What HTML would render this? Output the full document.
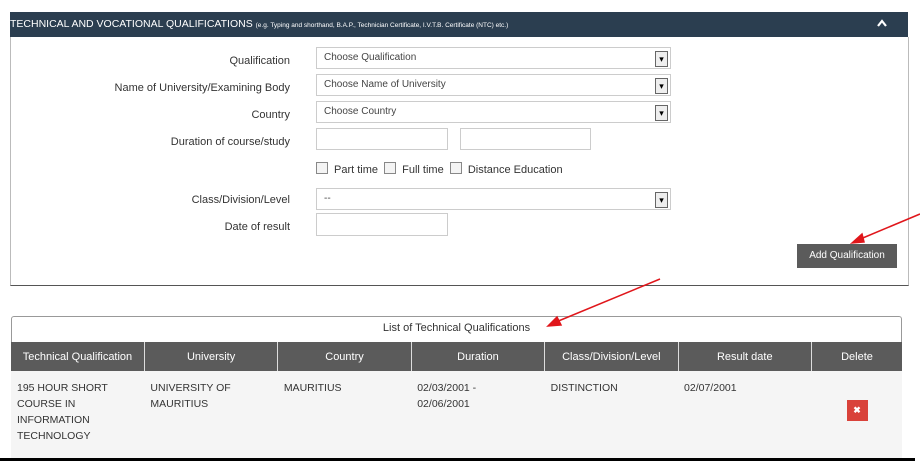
<!DOCTYPE html><html><head><style>
body{margin:0;width:920px;height:475px;background:#fff;font-family:"Liberation Sans",sans-serif;position:relative;overflow:hidden;font-size:11px;color:#333}
.a{position:absolute}
.hd{left:10px;top:12px;width:898px;height:25px;background:#2b3e50;color:#fff}
.lbl{position:absolute;right:630px;text-align:right;font-size:11px;color:#333;white-space:nowrap}
.sel{position:absolute;left:316px;width:355px;height:22px;border:1px solid #ccc;background:#fff;font-size:10px;color:#444;line-height:20px;padding-left:7px;box-sizing:border-box}
.sel:after{content:"▾";position:absolute;right:2px;top:3px;width:11px;height:14px;border:1px solid #666;background:#eee;font-size:9px;line-height:14px;text-align:center;color:#000}
.inp{position:absolute;height:22px;border:1px solid #ccc;background:#fff;box-sizing:border-box}
.cb{display:inline-block;width:10px;height:10px;border:1px solid #888;vertical-align:-1px;margin-right:6px;background:#f4f4f4}
table{border-collapse:collapse;position:absolute;left:11px;top:342px;width:891px;table-layout:fixed}
th{background:#5b5b5b;color:#fff;font-weight:normal;height:29px;font-size:11px;border-right:1px solid #ddd;padding:0}
td{background:#f5f5f5;vertical-align:top;padding:9px 20px 9px 6px;height:71px;font-size:10.5px;line-height:16px;color:#333}
</style></head><body>
<div class="a hd"><span class="a" style="left:0;top:6px;font-size:10.5px;white-space:nowrap">TECHNICAL AND VOCATIONAL QUALIFICATIONS <span style="font-size:6.5px">(e.g. Typing and shorthand, B.A.P., Technician Certificate, I.V.T.B. Certificate (NTC) etc.)</span></span>
<svg class="a" style="left:867px;top:7px" width="10" height="8"><path d="M1 7 L5 2 L9 7" stroke="#fff" stroke-width="2.2" fill="none"/></svg></div>
<div class="a" style="left:10px;top:37px;width:899px;height:249px;border:1px solid #bbb;border-top:none;border-bottom:1px solid #555;box-sizing:border-box"></div>
<div class="lbl" style="top:55px">Qualification</div>
<div class="lbl" style="top:82px">Name of University/Examining Body</div>
<div class="lbl" style="top:109px">Country</div>
<div class="lbl" style="top:136px">Duration of course/study</div>
<div class="lbl" style="top:194px">Class/Division/Level</div>
<div class="lbl" style="top:221px">Date of result</div>
<div class="sel" style="top:47px">Choose Qualification</div>
<div class="sel" style="top:74px">Choose Name of University</div>
<div class="sel" style="top:101px">Choose Country</div>
<div class="inp" style="left:316px;top:128px;width:132px"></div>
<div class="inp" style="left:460px;top:128px;width:131px"></div>
<div class="a" style="left:316px;top:162px;font-size:11px"><span class="cb"></span>Part time &nbsp;<span class="cb"></span>Full time &nbsp;<span class="cb"></span>Distance Education</div>
<div class="sel" style="top:188px">--</div>
<div class="inp" style="left:316px;top:213px;width:132px;height:23px"></div>
<div class="a" style="left:797px;top:244px;width:100px;height:24px;background:#5b5b5b;color:#fff;font-size:10px;line-height:24px;text-align:center">Add Qualification</div>
<div class="a" style="left:11px;top:316px;width:891px;height:144px;border:1px solid #999;border-bottom:none;box-sizing:border-box;border-radius:3px 3px 0 0"></div>
<div class="a" style="left:11px;top:322px;width:891px;text-align:center;font-size:11px">List of Technical Qualifications</div>
<table><tr><th>Technical Qualification</th><th>University</th><th>Country</th><th>Duration</th><th>Class/Division/Level</th><th>Result date</th><th style="width:90px;border:none">Delete</th></tr>
<tr><td>195 HOUR SHORT COURSE IN INFORMATION TECHNOLOGY</td><td>UNIVERSITY OF MAURITIUS</td><td>MAURITIUS</td><td style="padding-right:50px">02/03/2001 - 02/06/2001</td><td>DISTINCTION</td><td>02/07/2001</td><td style="position:relative"><div class="a" style="left:35px;top:29px;width:21px;height:21px;background:#d9423a;color:#fff;font-size:9px;line-height:21px;text-align:center;font-weight:bold">✖</div></td></tr></table>
<div class="a" style="left:0;top:458px;width:915px;height:3px;background:#000"></div>
<svg class="a" style="left:0;top:0" width="920" height="475"><g stroke="#e0161b" stroke-width="1.5" fill="#e0161b">
<line x1="920" y1="214" x2="858" y2="240"/><polygon points="852,243 862,234 864,242"/>
<line x1="660" y1="279" x2="556" y2="322"/><polygon points="548,326 557,317 561,325"/></g></svg>
</body></html>
